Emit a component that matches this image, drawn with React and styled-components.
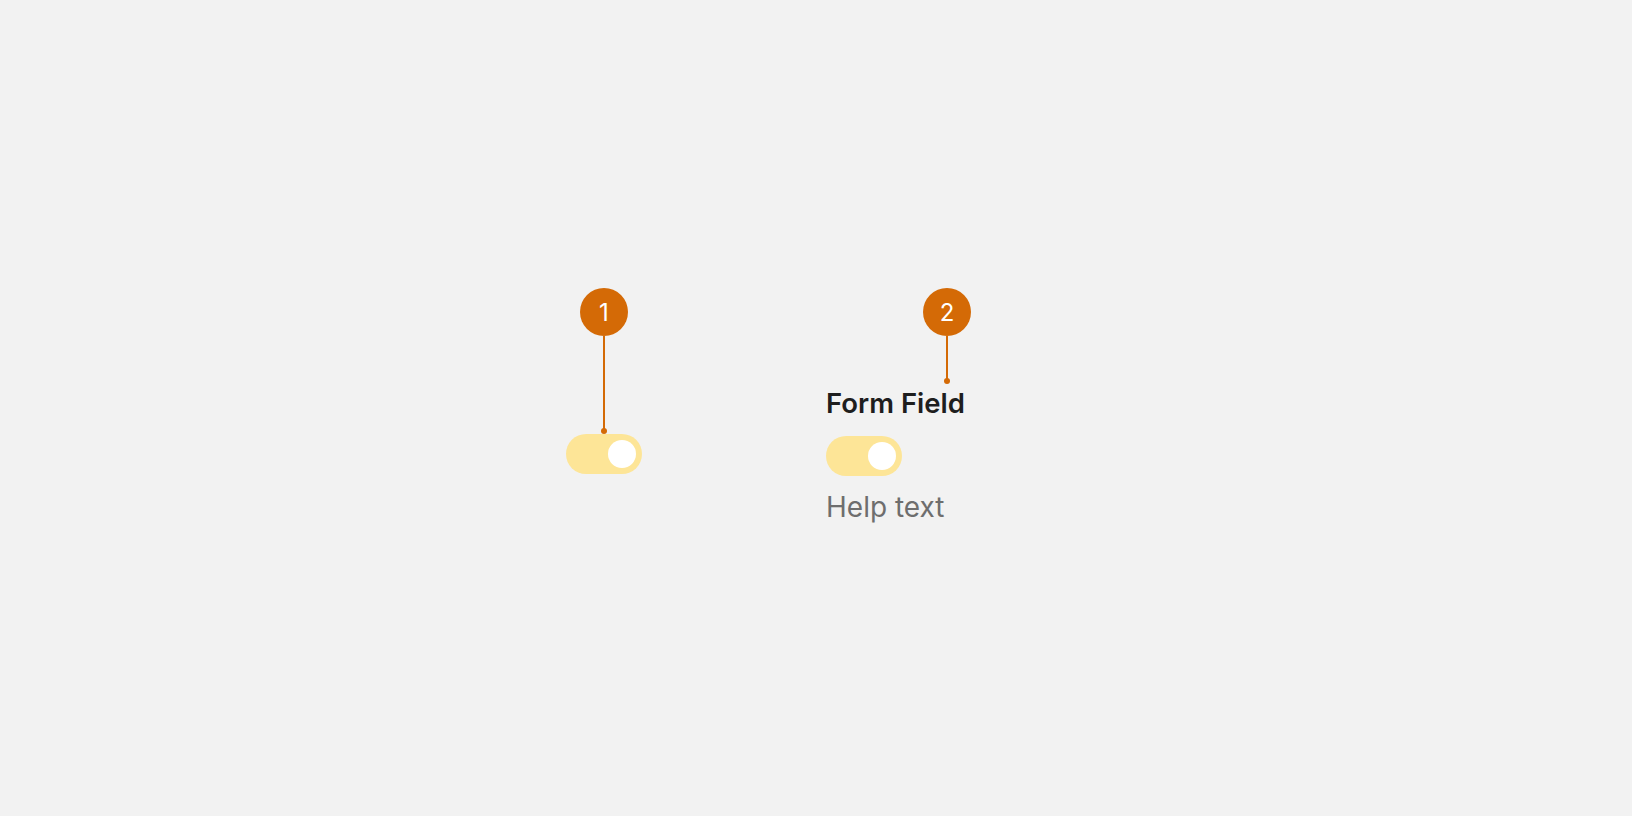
import React from 'react';
import styled, { createGlobalStyle } from 'styled-components';

const GlobalStyle = createGlobalStyle`
    html, body {
        margin: 0;
        padding: 0;
        background: #f2f2f2;
        font-family: Inter, "Noto Sans", sans-serif;
    }
`;

const Page = styled.div`
    width: 1632px;
    height: 816px;
    box-sizing: border-box;
    padding: 288px 0 0 566px;
    display: flex;
    gap: 184px;
`;

const Column = styled.div`
    display: flex;
    flex-direction: column;
    align-items: flex-start;
`;

const Annotation = styled.div`
    display: flex;
    flex-direction: column;
    align-items: center;
    margin-left: ${p => p.offset || 0}px;
`;

const Badge = styled.div`
    width: 48px;
    height: 48px;
    border-radius: 50%;
    background: #d46a06;
    color: #ffffff;
    font-size: 24px;
    font-weight: 400;
    display: flex;
    align-items: center;
    justify-content: center;
`;

const Stem = styled.div`
    width: 2px;
    height: ${p => p.length}px;
    background: #d46a06;
`;

const Dot = styled.div`
    width: 6px;
    height: 6px;
    margin-top: -3px;
    border-radius: 50%;
    background: #d46a06;
`;

const Toggle = styled.div`
    width: 76px;
    height: 40px;
    box-sizing: border-box;
    padding: 6px;
    border-radius: 20px;
    background: #fde597;
    display: flex;
    justify-content: flex-end;
    align-items: center;
    margin-top: ${p => p.top || 0}px;
`;

const Knob = styled.div`
    width: 28px;
    height: 28px;
    border-radius: 50%;
    background: #ffffff;
`;

const Label = styled.div`
    font-size: 27.5px;
    font-weight: 600;
    color: #1e1e1e;
    line-height: 33px;
    margin-top: 3px;
`;

const HelpText = styled.div`
    font-size: 28px;
    font-weight: 400;
    color: #6e6e6e;
    line-height: 34px;
    margin-top: 14px;
`;

const App = () => {
    return (
        <>
            <GlobalStyle />
            <Page>
                <Column>
                    <Annotation offset={14}>
                        <Badge>1</Badge>
                        <Stem length={95} />
                        <Dot />
                    </Annotation>
                    <Toggle>
                        <Knob />
                    </Toggle>
                </Column>
                <Column>
                    <Annotation offset={97}>
                        <Badge>2</Badge>
                        <Stem length={45} />
                        <Dot />
                    </Annotation>
                    <Label>Form Field</Label>
                    <Toggle top={16}>
                        <Knob />
                    </Toggle>
                    <HelpText>Help text</HelpText>
                </Column>
            </Page>
        </>
    );
};

export default App;
